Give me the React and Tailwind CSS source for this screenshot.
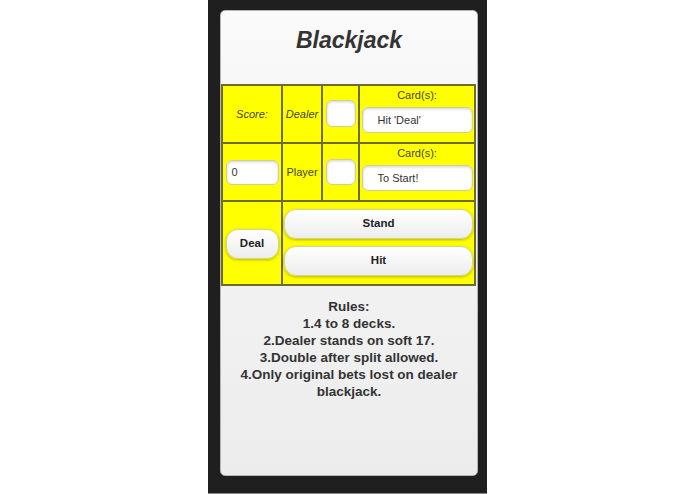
import React from 'react';

const font = { fontFamily: '"Liberation Sans", Arial, sans-serif' };

function Field({ value, className }) {
  return (
    <div
      className={`bg-white border border-[#cfcf9a] rounded-[6px] shadow-[inset_0_1px_3px_rgba(0,0,0,0.18)] flex items-center text-[11px] text-[#333] ${className}`}
    >
      {value}
    </div>
  );
}

function Btn({ label, className }) {
  return (
    <button
      className={`bg-gradient-to-b from-white to-[#ededed] border border-[#d6d68a] rounded-[12px] shadow-[0_1px_3px_rgba(0,0,0,0.3)] text-[11.5px] font-bold text-[#222] flex items-center justify-center ${className}`}
    >
      {label}
    </button>
  );
}

export default function App() {
  return (
    <div className="w-full h-[494px] bg-white flex justify-center" style={font}>
      <div className="w-[279px] h-[494px] bg-[#1f1f1f] border-b border-[#8a8a8a] pt-[10px] pl-[12px]">
        <div className="w-[258px] h-[466px] rounded-[5px] border border-[#b5b5b5] bg-gradient-to-b from-[#fafafa] to-[#ececec] flex flex-col">
          {/* Title */}
          <div className="h-[59px] flex items-center justify-center">
            <h1 className="text-[23px] font-bold italic text-[#333]">Blackjack</h1>
          </div>

          {/* Game table */}
          <div className="mt-[14px] w-[255px] grid grid-cols-[58px_38px_35px_114px] grid-rows-[56px_56px_82px] gap-[2px] p-[2px] bg-[#6d6d2b]">
            {/* Row 1 */}
            <div className="bg-[#ffff00] flex items-center justify-center text-[11px] italic text-[#444]">Score:</div>
            <div className="bg-[#ffff00] flex items-center justify-center text-[11px] italic text-[#444]">Dealer</div>
            <div className="bg-[#ffff00] flex items-center justify-center pb-px">
              <Field value="" className="w-[30px] h-[27px]" />
            </div>
            <div className="bg-[#ffff00] flex flex-col items-center pt-[2px]">
              <span className="text-[11px] text-[#444] leading-[14px]">Card(s):</span>
              <Field value="Hit 'Deal'" className="mt-[5px] w-[111px] h-[26px] pl-[15px]" />
            </div>

            {/* Row 2 */}
            <div className="bg-[#ffff00] flex items-center justify-center">
              <Field value="0" className="w-[53px] h-[25px] pl-[5px]" />
            </div>
            <div className="bg-[#ffff00] flex items-center justify-center text-[11px] text-[#444]">Player</div>
            <div className="bg-[#ffff00] flex items-center justify-center">
              <Field value="" className="w-[30px] h-[26px]" />
            </div>
            <div className="bg-[#ffff00] flex flex-col items-center pt-[2px]">
              <span className="text-[11px] text-[#444] leading-[14px]">Card(s):</span>
              <Field value="To Start!" className="mt-[5px] w-[111px] h-[26px] pl-[15px]" />
            </div>

            {/* Row 3 */}
            <div className="bg-[#ffff00] flex items-center justify-center pt-px">
              <Btn label="Deal" className="w-[53px] h-[30px]" />
            </div>
            <div className="col-span-3 bg-[#ffff00] flex flex-col items-center pt-[7px] gap-[7px]">
              <Btn label="Stand" className="w-[189px] h-[30px]" />
              <Btn label="Hit" className="w-[189px] h-[30px]" />
            </div>
          </div>

          {/* Rules */}
          <div className="mt-[12px] px-[8px] text-center text-[13.5px] font-bold leading-[17px] text-[#333]">
            <p>Rules:</p>
            <p>1.4 to 8 decks.</p>
            <p>2.Dealer stands on soft 17.</p>
            <p>3.Double after split allowed.</p>
            <p>4.Only original bets lost on dealer blackjack.</p>
          </div>
        </div>
      </div>
    </div>
  );
}
